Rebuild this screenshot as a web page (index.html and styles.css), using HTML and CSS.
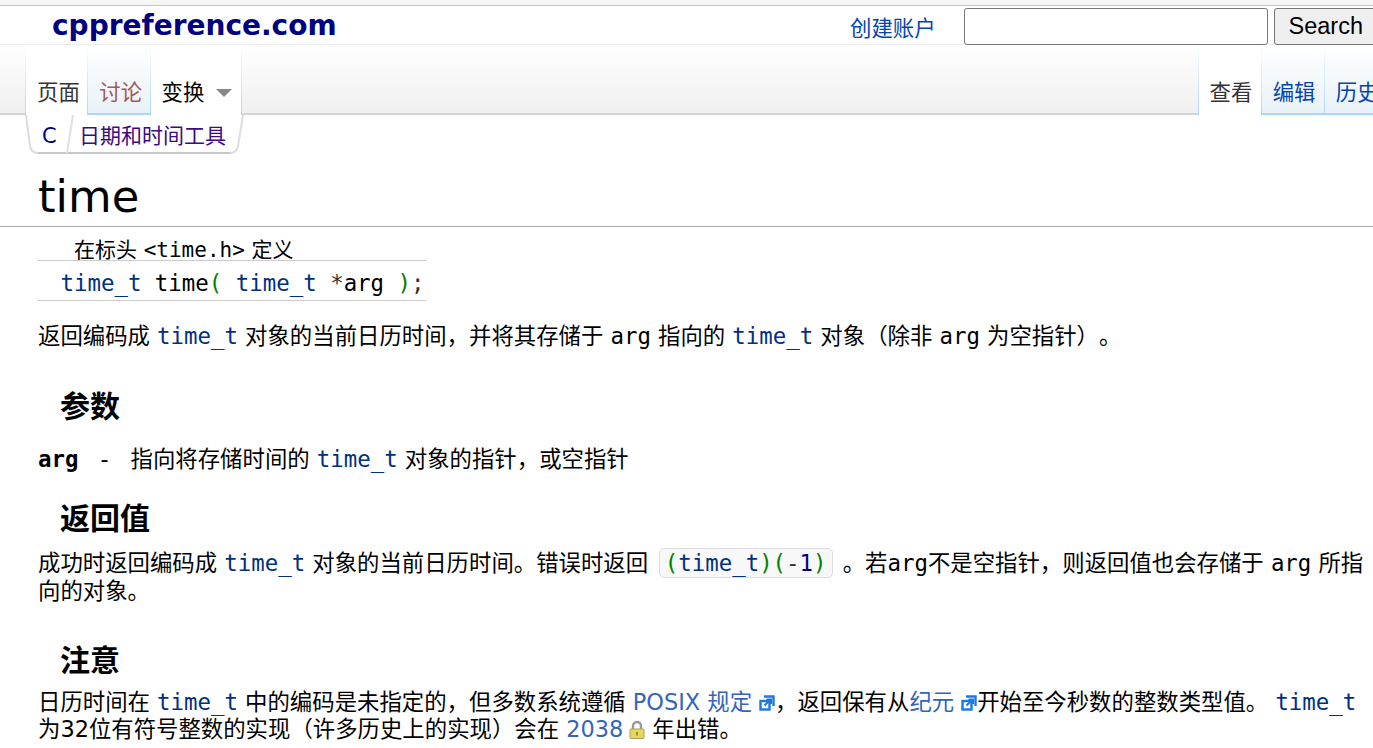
FILE: index.html
```html
<!DOCTYPE html>
<html lang="zh">
<head>
<meta charset="utf-8">
<title>time - cppreference.com</title>
<link rel="stylesheet" href="styles.css">
</head>
<body>
<header class="head">
  <div class="logo">cppreference.com</div>
  <a class="account" href="#">创建账户</a>
  <input class="search" type="text">
  <button class="search-btn">Search</button>
</header>
<nav class="tabs">
  <ul class="tabgroup">
    <li class="tab on first">页面</li>
    <li class="tab off brown">讨论</li>
    <li class="tab on var">变换<span class="arrow"></span></li>
  </ul>
  <ul class="tabgroup right">
    <li class="tab on first">查看</li>
    <li class="tab off blue">编辑</li>
    <li class="tab off blue">历史</li>
  </ul>
</nav>
<div class="crumbs">
  <svg class="crumb-frame" viewBox="0 0 219 41" aria-hidden="true"><path d="M1 1 L5 32 Q6 39 13 39 H205 Q212 39 213 32 L218 1" fill="none" stroke="#ddd" stroke-width="2"/><path d="M13 39 H205" fill="none" stroke="#c8c8c8" stroke-width="2"/><path d="M48 1 L42 39" fill="none" stroke="#e0e0e0" stroke-width="2"/></svg>
  <span class="crumb c">C</span><span class="crumb d">日期和时间工具</span>
</div>
<main class="content">
  <h1 class="title">time</h1>
  <div class="decl">
    <div class="decl-head">在标头 <code class="plain">&lt;time.h&gt;</code> 定义</div>
    <div class="decl-sig"><code class="plain"><span class="t">time_t</span> time<span class="g">(</span> <span class="t">time_t</span> <span class="s">*</span>arg <span class="g">)</span><span class="s">;</span></code></div>
  </div>
  <p class="lead">返回编码成 <code class="t">time_t</code> 对象的当前日历时间，并将其存储于 <code class="plain">arg</code> 指向的 <code class="t">time_t</code> 对象（除非 <code class="plain">arg</code> 为空指针）。</p>
  <h3 class="h h1st">参数</h3>
  <p class="param"><code class="plain b">arg</code><span class="dash">-</span>指向将存储时间的 <code class="t">time_t</code> 对象的指针，或空指针</p>
  <h3 class="h h2nd">返回值</h3>
  <p class="para">成功时返回编码成 <code class="t">time_t</code> 对象的当前日历时间。错误时返回 <code class="box"><span class="g">(</span><span class="t">time_t</span><span class="g">)(</span><span class="s">-</span><span class="n">1</span><span class="g">)</span></code> 。若<code class="plain">arg</code>不是空指针，则返回值也会存储于 <code class="plain">arg</code> 所指向的对象。</p>
  <h3 class="h h3rd">注意</h3>
  <p class="para last">日历时间在 <code class="t">time_t</code> 中的编码是未指定的，但多数系统遵循 <a class="ext" href="#">POSIX 规定<svg class="exticon" viewBox="0 0 16 16"><path d="M5 1.5h9.5V11" fill="none" stroke="#1f78e0" stroke-width="2.4"/><rect x="1.5" y="6" width="9" height="8.5" fill="#fff" stroke="#1f78e0" stroke-width="2.4"/><path d="M5.5 10.5L11 5M7.5 4.5h4.5V9" fill="none" stroke="#1f78e0" stroke-width="2"/></svg></a>，返回保有从<a class="ext" href="#">纪元<svg class="exticon" viewBox="0 0 16 16"><path d="M5 1.5h9.5V11" fill="none" stroke="#1f78e0" stroke-width="2.4"/><rect x="1.5" y="6" width="9" height="8.5" fill="#fff" stroke="#1f78e0" stroke-width="2.4"/><path d="M5.5 10.5L11 5M7.5 4.5h4.5V9" fill="none" stroke="#1f78e0" stroke-width="2"/></svg></a>开始至今秒数的整数类型值。 <code class="t">time_t</code> 为32位有符号整数的实现（许多历史上的实现）会在 <a class="year" href="#">2038<svg class="lock" viewBox="0 0 16 18"><path d="M4 8V5a4 4 0 0 1 8 0v3" fill="none" stroke="#9a9a94" stroke-width="2.4"/><rect x="1" y="8" width="14" height="9.5" rx="1" fill="#e6d65e" stroke="#a8a06a"/><rect x="7" y="11" width="2" height="3.5" fill="#a08f2e"/></svg></a> 年出错。</p>
</main>
</body>
</html>
```
FILE: styles.css
```css
html, body { margin: 0; padding: 0; height: 748px; overflow: hidden; background: #fff; }
body { font-family: "DejaVu Sans", "Noto Sans CJK SC", sans-serif; font-size: 22.4px; color: #000; text-spacing-trim: space-all; }
.head { display: flex; align-items: flex-start; height: 39px; background: #fff; border-top: 5px solid #f5f5f5; border-bottom: 1px solid #ececec; box-shadow: inset 0 1px 0 #c4c4c4; }
.logo { flex: none; width: 798px; margin-left: 52px; font: bold 28px/41px "DejaVu Sans", sans-serif; color: #000080; }
.account { flex: none; width: 114px; color: #0645ad; font-size: 21.4px; line-height: 48px; text-decoration: none; white-space: nowrap; }
.search { flex: none; box-sizing: border-box; width: 304px; height: 37px; margin-top: 3px; border: 1px solid #767676; border-radius: 3px; padding: 0; background: #fff; }
.search-btn { flex: none; box-sizing: border-box; width: 110px; height: 37px; margin: 3px 0 0 6px; border: 1px solid #767676; border-radius: 3px; background: #efefef; font: 23.5px "Liberation Sans", sans-serif; color: #000; text-align: left; padding: 0 0 0 13.5px; }
.tabs { display: flex; justify-content: space-between; height: 68px; background: linear-gradient(#fff, #f0f0f0); border-bottom: 2px solid #d4d4d4; font-size: 21.4px; }
.tabgroup { display: flex; margin: 0 0 0 25px; padding: 0; list-style: none; }
.tabgroup.right { margin: 0 -14.9px 0 0; }
.tab { box-sizing: border-box; height: 70px; padding: 31px 7.5px 0 11px; line-height: 34px; white-space: nowrap; border-right: 1.5px solid; border-image: linear-gradient(#fff, #a7d7f9) 1; }
.tabgroup.right .tab { padding-right: 8.3px; }
.tab.first { border-left: 1.5px solid; }
.on { background: #fff; color: #333; }
.off { background: linear-gradient(#fff, #e8f2f8); box-shadow: inset 0 -2px 0 #a7d7f9; }
.brown { color: #a55858; }
.blue { color: #0645ad; }
.tab.var { color: #000; padding-left: 11px; padding-right: 9px; }
.arrow { display: inline-block; width: 0; height: 0; border: 8.5px solid transparent; border-top: 8px solid #888; border-bottom: 0; margin: 0 0 3px 12px; }
.crumbs { position: relative; display: flex; margin: -1px 0 0 25px; width: 219px; height: 41px; font-size: 21px; line-height: 44px; }
.crumb-frame { position: absolute; left: 0; top: 0; width: 219px; height: 41px; }
.crumb { white-space: nowrap; }
.crumb.c { width: 54px; box-sizing: border-box; padding-left: 17px; color: #000080; }
.crumb.d { color: #3d0a80; }
.content { padding: 0 0 0 38px; }
.title { margin: 14px 0 0 -38px; padding: 0 0 0 38px; font-size: 44.8px; font-weight: normal; line-height: 56px; height: 57px; border-bottom: 1px solid #aaa; }
.decl { width: 388px; font-size: 21px; }
.decl-head { height: 34px; box-sizing: border-box; padding-left: 36px; line-height: 46px; white-space: nowrap; border-bottom: 1px solid #ccc; overflow: hidden; }
.decl-sig { height: 40px; box-sizing: border-box; padding-left: 22.5px; line-height: 45px; border-bottom: 1px solid #ccc; white-space: nowrap; }
code { font-family: "DejaVu Sans Mono", "Noto Sans CJK SC", monospace; font-size: 22.4px; }
.plain { color: #000; }
.decl-head code { font-size: 21px; }
.t { color: #003080; }
.g { color: #008000; }
.s { color: #333; }
.n { color: #000080; }
.b { font-weight: bold; }
p { margin: 0; line-height: 28px; }
.lead { margin-top: 21px; }
.h { margin: 0 0 0 22px; font-size: 30px; font-weight: bold; line-height: 40px; }
.h1st { margin-top: 37px; }
.param { margin-top: 18px; }
.dash { margin: 0 22px; }
.h2nd { margin-top: 26px; }
.para { margin-top: 10px; }
.para.last { margin-top: 8px; line-height: 27px; }
.h3rd { margin-top: 36px; }
.box { display: inline-block; line-height: 28px; padding: 0 5px 0 4.5px; margin: -2px 3px -2px 4px; background: #f8f8f8; border: 1px solid #ddd; border-radius: 5px; }
.ext, .year { color: #3366bb; text-decoration: none; }
.exticon { width: 16px; height: 16px; margin-left: 7px; vertical-align: -1px; }
.lock { width: 16px; height: 18px; margin-left: 6px; vertical-align: -2px; }
```
